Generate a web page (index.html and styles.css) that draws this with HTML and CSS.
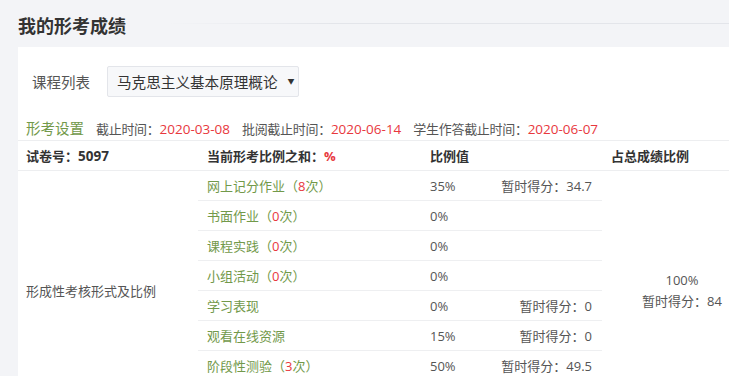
FILE: index.html
```html
<!DOCTYPE html>
<html lang="zh-CN">
<head>
<meta charset="utf-8">
<title>我的形考成绩</title>
<link rel="stylesheet" href="styles.css">
</head>
<body>
<div class="page">
  <div class="page-head">
    <h1 class="title">我的形考成绩</h1>
    <div class="head-line"></div>
  </div>
  <div class="card">
    <div class="course-row">
      <span class="course-label">课程列表</span>
      <div class="select">
        <span class="select-text">马克思主义基本原理概论</span>
        <span class="select-arrow">▼</span>
      </div>
    </div>
    <div class="deadline-row">
      <span class="set-link">形考设置</span>
      <span class="dl-label">截止时间：</span><span class="dl-date">2020-03-08</span>
      <span class="dl-label">批阅截止时间：</span><span class="dl-date">2020-06-14</span>
      <span class="dl-label">学生作答截止时间：</span><span class="dl-date">2020-06-07</span>
    </div>
    <table class="score-table">
      <colgroup>
        <col class="c1"><col class="c2"><col class="c3"><col class="c4"><col class="c5">
      </colgroup>
      <thead>
        <tr>
          <th class="col-first">试卷号：<b class="num">5097</b></th>
          <th>当前形考比例之和：<span class="red">%</span></th>
          <th>比例值</th>
          <th></th>
          <th>占总成绩比例</th>
        </tr>
      </thead>
      <tbody>
        <tr>
          <td class="col-first merged" rowspan="8">形成性考核形式及比例</td>
          <td class="item"><span class="green">网上记分作业（<span class="red">8</span>次）</span></td>
          <td class="item">35%</td>
          <td class="item score">暂时得分：34.7</td>
          <td class="total" rowspan="8">100%<br>暂时得分：84</td>
        </tr>
        <tr>
          <td class="item"><span class="green">书面作业（<span class="red">0</span>次）</span></td>
          <td class="item">0%</td>
          <td class="item score"></td>
        </tr>
        <tr>
          <td class="item"><span class="green">课程实践（<span class="red">0</span>次）</span></td>
          <td class="item">0%</td>
          <td class="item score"></td>
        </tr>
        <tr>
          <td class="item"><span class="green">小组活动（<span class="red">0</span>次）</span></td>
          <td class="item">0%</td>
          <td class="item score"></td>
        </tr>
        <tr>
          <td class="item"><span class="green">学习表现</span></td>
          <td class="item">0%</td>
          <td class="item score">暂时得分：0</td>
        </tr>
        <tr>
          <td class="item"><span class="green">观看在线资源</span></td>
          <td class="item">15%</td>
          <td class="item score">暂时得分：0</td>
        </tr>
        <tr>
          <td class="item"><span class="green">阶段性测验（<span class="red">3</span>次）</span></td>
          <td class="item">50%</td>
          <td class="item score">暂时得分：49.5</td>
        </tr>
        <tr>
          <td class="item"><span class="green">期末考试</span></td>
          <td class="item">0%</td>
          <td class="item score"></td>
        </tr>
      </tbody>
    </table>
  </div>
</div>
</body>
</html>
```

FILE: styles.css
```css
html, body {
  margin: 0;
  padding: 0;
  overflow: hidden;
  background: #f3f4f7;
}
body {
  font-family: "Open Sans", "Noto Sans CJK SC", sans-serif;
  color: #555;
  width: 729px;
  height: 376px;
}
.page {
  padding-left: 18px;
}
.page-head {
  display: flex;
  align-items: center;
  height: 47px;
}
.title {
  margin: 0;
  font-size: 18px;
  font-weight: bold;
  color: #333;
  line-height: 24px;
  padding-top: 4px;
  flex: none;
}
.head-line {
  flex: 1;
  height: 1px;
  margin-left: 40px;
  margin-top: -1px;
  background: linear-gradient(to right, rgba(226,228,233,0), #e3e5ea 30%, #e3e5ea);
}
.card {
  background: #fff;
  width: 780px;
  height: 400px;
  padding: 19px 0 0 8px;
  box-sizing: border-box;
}
.course-row {
  display: flex;
  align-items: center;
  padding-left: 6px;
  height: 31px;
}
.course-label {
  font-size: 14.5px;
  color: #555;
  width: 75px;
  flex: none;
}
.select {
  display: flex;
  align-items: center;
  width: 192px;
  height: 31px;
  box-sizing: border-box;
  border: 1px solid #e3e5ea;
  border-radius: 2px;
  background: #f7f8fa;
  padding: 0 0 0 9px;
}
.select-text {
  font-size: 14.6px;
  color: #333;
  flex: none;
}
.select-arrow {
  font-size: 7px;
  color: #333;
  margin-left: 10px;
  margin-top: -2px;
}
.deadline-row {
  display: flex;
  align-items: baseline;
  margin-top: 20px;
  height: 23px;
  white-space: nowrap;
}
.set-link {
  font-size: 14.5px;
  color: #72994a;
  margin-right: 12px;
}
.dl-label {
  font-size: 13px;
  letter-spacing: -0.3px;
  color: #555;
}
.dl-date {
  font-size: 13.5px;
  color: #e8383d;
  margin-right: 12px;
}
.score-table {
  margin-left: -8px;
  border-collapse: collapse;
  table-layout: fixed;
  width: 744px;
  font-size: 13px;
}
.c1 { width: 180px; }
.c2 { width: 223px; }
.c3 { width: 80px; }
.c4 { width: 101px; }
.c5 { width: 160px; }
.score-table th {
  text-align: left;
  font-weight: bold;
  color: #333;
  height: 29px;
  padding: 0 0 0 9px;
  border-top: 1px solid #edeef0;
  border-bottom: 1px solid #edeef0;
  white-space: nowrap;
}
.score-table th.col-first {
  padding-left: 8px;
}
.num {
  font-weight: bold;
  font-size: 13.5px;
}
.score-table td {
  padding: 0 0 0 9px;
  height: 29px;
  white-space: nowrap;
  color: #555;
}
.score-table td.item {
  border-bottom: 1px solid #eeeff1;
}
.score-table td.col-first {
  padding-left: 8px;
}
.score-table td.merged {
  vertical-align: middle;
}
.score-table td.score {
  text-align: right;
  padding: 0 10px 0 0;
}
.score-table td.total {
  text-align: center;
  line-height: 21px;
  padding: 0;
}
.green { color: #72994a; }
.red { color: #e8383d; }
```
